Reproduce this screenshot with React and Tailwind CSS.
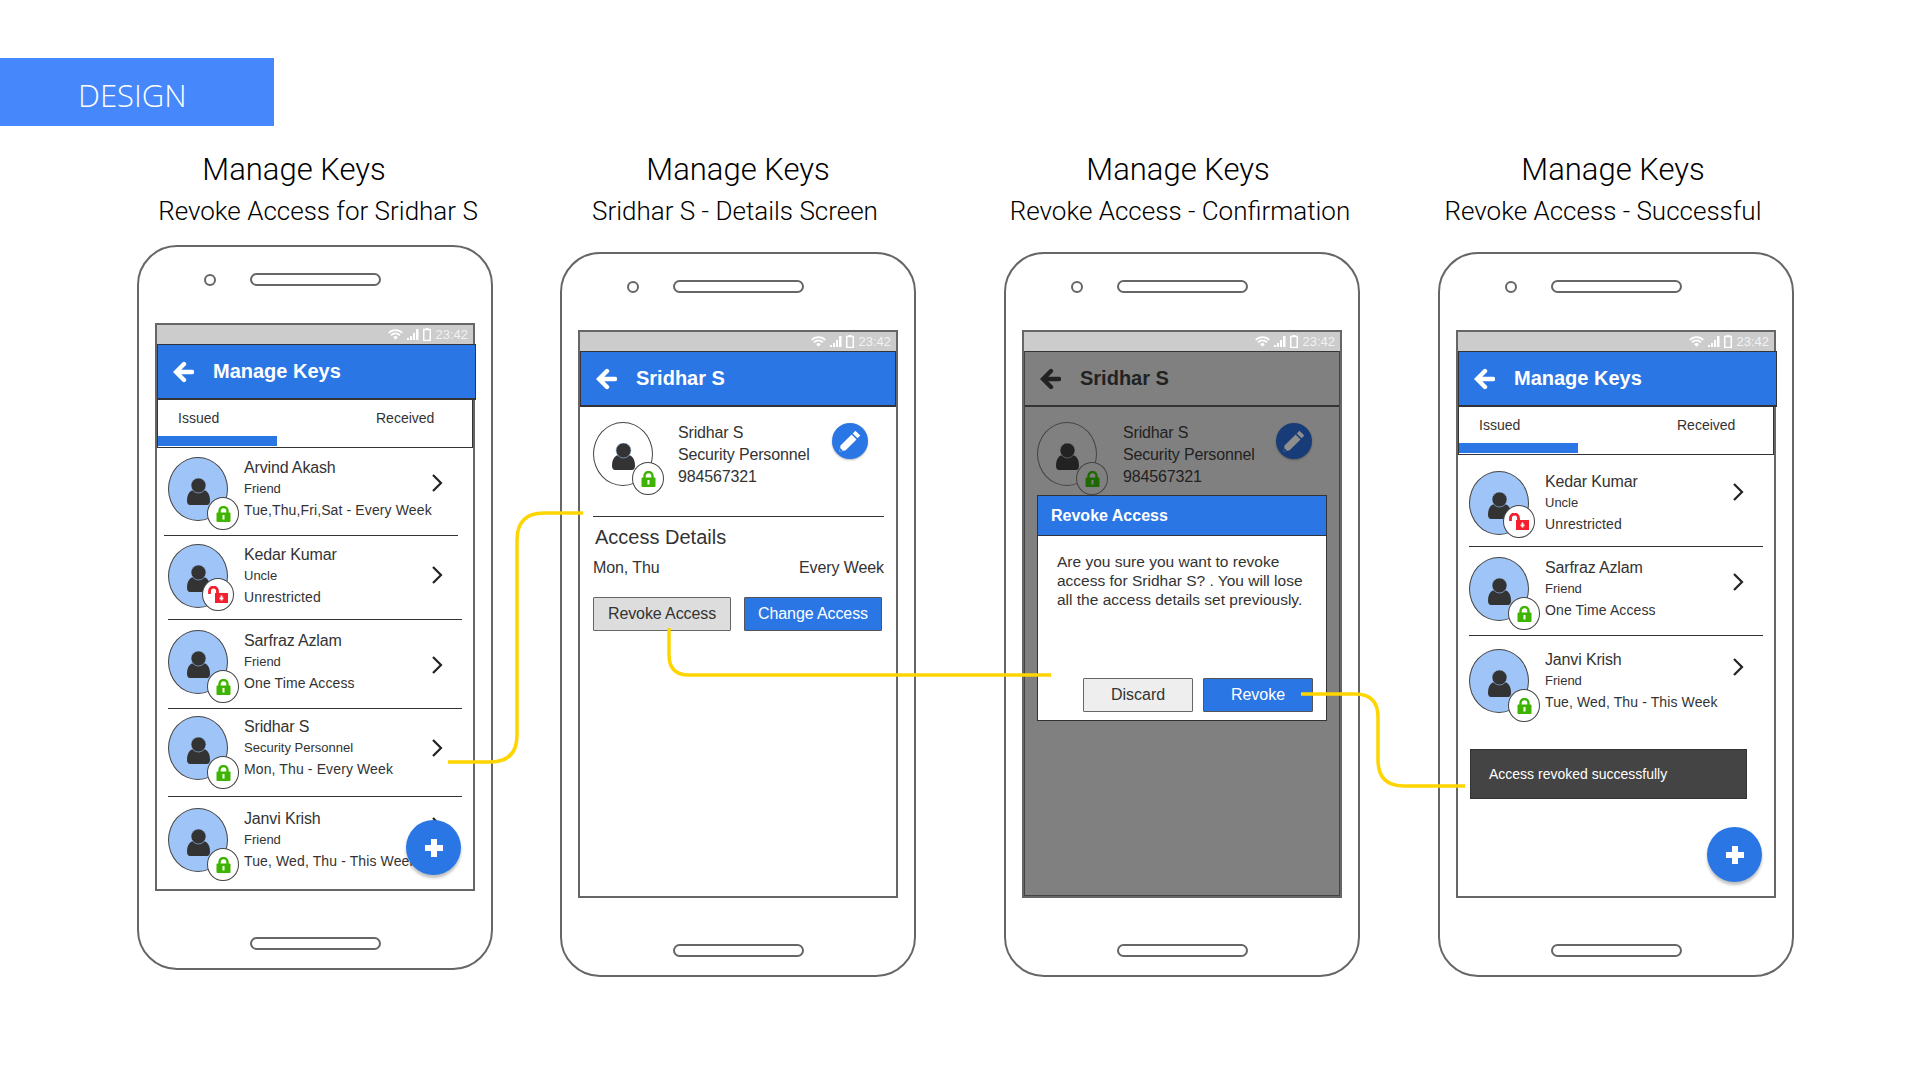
import React from 'react';

const columns = [
    { title: 'Manage Keys', sub: 'Revoke Access for Sridhar S', titleCls: 'mr-[42px]', subCls: 'ml-[6px]', phoneCls: 'mt-[14px]' },
    { title: 'Manage Keys', sub: 'Sridhar S - Details Screen', titleCls: '', subCls: 'mr-[6px]', phoneCls: 'mt-[21px]' },
    { title: 'Manage Keys', sub: 'Revoke Access - Confirmation', titleCls: 'mr-[8px]', subCls: 'mr-[4px]', phoneCls: 'mt-[21px]' },
    { title: 'Manage Keys', sub: 'Revoke Access - Successful', titleCls: 'mr-[6px]', subCls: 'mr-[26px]', phoneCls: 'mt-[21px]' },
];

const issuedRows = [
    { name: 'Arvind Akash', role: 'Friend', access: 'Tue,Thu,Fri,Sat - Every Week', cls: 'h-[88px] pt-[9px]', chevron: 'mt-[17px]', divider: 'ml-[7px]' },
    { name: 'Kedar Kumar', role: 'Uncle', access: 'Unrestricted', open: true, cls: 'h-[84px] pt-[8px]', chevron: 'mt-[22px]', divider: 'ml-[11px]' },
    { name: 'Sarfraz Azlam', role: 'Friend', access: 'One Time Access', cls: 'h-[89px] pt-[10px]', chevron: 'mt-[26px]', divider: 'ml-[11px]' },
    { name: 'Sridhar S', role: 'Security Personnel', access: 'Mon, Thu - Every Week', cls: 'h-[88px] pt-[7px]', chevron: 'mt-[23px]', divider: 'ml-[11px]' },
    { name: 'Janvi Krish', role: 'Friend', access: 'Tue, Wed, Thu - This Week', cls: 'h-[82px] pt-[11px]', chevron: 'mt-[9px]' },
];

const revokedRows = [
    { name: 'Kedar Kumar', role: 'Uncle', access: 'Unrestricted', open: true, cls: 'h-[92px] pt-[16px]', chevron: 'mt-[12px]', divider: 'ml-[11px]' },
    { name: 'Sarfraz Azlam', role: 'Friend', access: 'One Time Access', cls: 'h-[89px] pt-[10px]', chevron: 'mt-[16px]', divider: 'ml-[11px]' },
    { name: 'Janvi Krish', role: 'Friend', access: 'Tue, Wed, Thu - This Week', cls: 'h-[113px] pt-[13px]', chevron: 'mt-[9px]' },
];

function Lock({ dim }) {
    return (
        <svg className="h-[16px] w-[15px]" viewBox="0 0 15 16">
            <path d="M3.5 8V5a4 4 0 0 1 8 0v3" fill="none" stroke={dim ? '#1f6a00' : '#3cb400'} strokeWidth="2.4" />
            <rect x="0.5" y="6.5" width="14" height="9.5" rx="1" fill={dim ? '#1f6a00' : '#3cb400'} />
            <rect x="6.5" y="9" width="2" height="4.5" fill={dim ? '#808080' : '#ffffff'} />
        </svg>
    );
}

function OpenLock() {
    return (
        <svg className="h-[17px] w-[20px]" viewBox="0 0 20 17">
            <path d="M1.5 8V5a4 4 0 0 1 8 0v3" fill="none" stroke="#f5202f" strokeWidth="2.8" />
            <rect x="7" y="7" width="13" height="10" fill="#f5202f" />
            <rect x="12.6" y="9.5" width="1.8" height="5" fill="#ffffff" />
            <rect x="11.5" y="11.6" width="4" height="1.6" fill="#ffffff" />
        </svg>
    );
}

function Person({ dark }) {
    const fill = dark ? '#222222' : '#333333';
    return (
        <svg className="mt-[5px] h-[27px] w-[23px]" viewBox="0 0 23 27">
            <path d="M0 23c0-7 3-11 7-11h9c4 0 7 4 7 11 0 2-1 4-3 4H3c-2 0-3-2-3-4z" fill={fill} />
            <circle cx="11.5" cy="7.5" r="7.5" fill={fill} stroke={dark ? '#808080' : '#9fc4f7'} strokeWidth="0.6" />
        </svg>
    );
}

function Avatar({ open, blank, dim }) {
    let bg = 'bg-[#9fc4f7]';
    if (blank) bg = dim ? 'bg-[#808080]' : 'bg-white';
    return (
        <div className={`relative flex h-[64px] w-[60px] shrink-0 items-center justify-center rounded-[50%] border border-[#444] ${bg}`}>
            <Person dark={dim} />
            <div
                className={`absolute flex h-[33px] w-[32px] items-center justify-center rounded-[50%] border border-[#444] ${
                    open ? 'left-[33px] top-[33px]' : 'left-[38px] top-[39px]'
                } ${dim ? 'bg-[#808080]' : 'bg-white'}`}
            >
                {open ? <OpenLock /> : <Lock dim={dim} />}
            </div>
        </div>
    );
}

function Chevron({ className }) {
    return (
        <svg className={`h-[18px] w-[12px] shrink-0 ${className}`} viewBox="0 0 12 18">
            <path d="M2 1l8 8-8 8" fill="none" stroke="#222222" strokeWidth="2.2" />
        </svg>
    );
}

function ContactRow({ row }) {
    return (
        <div className={`relative flex flex-col ${row.cls}`}>
            <div className="flex items-start pl-[11px]">
                <Avatar open={row.open} />
                <div className="ml-[16px] w-[187px] shrink-0 whitespace-nowrap text-[#333]">
                    <div className="h-[21px] text-[16px] leading-[22px] tracking-[-0.15px]">{row.name}</div>
                    <div className="h-[21px] text-[13px] leading-[22px]">{row.role}</div>
                    <div className="h-[22px] text-[14px] leading-[23px] tracking-[0.12px]">{row.access}</div>
                </div>
                <Chevron className={row.chevron} />
            </div>
            {row.divider && <div className={`mt-auto h-px w-[294px] bg-[#333] ${row.divider}`} />}
        </div>
    );
}

function StatusBar() {
    return (
        <div className="flex h-[19px] items-center justify-end gap-[4px] bg-[#cccccc] pr-[5px] text-[13px] leading-none text-[#f2f2f2]">
            <svg className="h-[11px] w-[15px]" viewBox="0 0 15 11">
                <path d="M0.7 4a9.5 9.5 0 0 1 13.6 0M3 6.4a6.2 6.2 0 0 1 9 0" fill="none" stroke="#ffffff" strokeWidth="1.7" />
                <path d="M5.2 8.2a3.2 3.2 0 0 1 4.6 0L7.5 10.8z" fill="#ffffff" />
            </svg>
            <svg className="h-[11px] w-[12px]" viewBox="0 0 12 11">
                <path d="M0 9h2v2H0zM3 7h2v4H3zM6 4h2v7H6zM9 0h2.5v11H9z" fill="#ffffff" />
            </svg>
            <svg className="h-[13px] w-[8px]" viewBox="0 0 8 13">
                <rect x="2.5" y="0" width="3" height="1.5" fill="#ffffff" />
                <rect x="0.75" y="1.5" width="6.5" height="11" fill="none" stroke="#ffffff" strokeWidth="1.5" />
            </svg>
            <span>23:42</span>
        </div>
    );
}

function Header({ title, dim, wide }) {
    const color = dim ? '#222222' : '#ffffff';
    let cls = 'border border-[#333] bg-[#2b76e5] text-white';
    if (dim) cls = 'border-t border-t-[#333] text-[#222]';
    if (wide) cls += ' w-[319px]';
    return (
        <div className={`flex h-[56px] items-center border-b-2 border-[#333] text-[20px] font-bold ${cls}`}>
            <svg className="ml-[15px] h-[22px] w-[21px]" viewBox="0 0 21 22">
                <path d="M19 11H4M11 3l-8 8 8 8" fill="none" stroke={color} strokeWidth="4.4" strokeLinecap="round" />
            </svg>
            <span className="-mt-[1px] ml-[19px]">{title}</span>
        </div>
    );
}

function Tabs() {
    return (
        <div className="flex h-[48px] flex-col border-x border-b border-[#333]">
            <div className="flex h-[36px] items-center text-[14px] text-[#333]">
                <span className="w-[218px] pl-[20px]">Issued</span>
                <span>Received</span>
            </div>
            <div className="h-[10px] w-[119px] bg-[#2b76e5]" />
        </div>
    );
}

function Fab() {
    return (
        <div className="absolute bottom-[14px] right-[12px] flex h-[55px] w-[55px] items-center justify-center rounded-full bg-[#2b76e5] shadow-[0_3px_3px_rgba(0,0,0,0.25)]">
            <svg className="h-[20px] w-[20px]" viewBox="0 0 20 20">
                <path d="M10 1v18M1 10h18" fill="none" stroke="#ffffff" strokeWidth="6" />
            </svg>
        </div>
    );
}

function ProfileBlock({ dim }) {
    return (
        <div className={`flex items-start pt-[15px] ${dim ? 'pl-[12px]' : 'pl-[13px]'}`}>
            <Avatar blank dim={dim} />
            <div
                className={`shrink-0 whitespace-nowrap text-[16px] leading-[22px] tracking-[-0.15px] ${
                    dim ? 'ml-[26px] w-[151px] text-[#222]' : 'ml-[25px] w-[152px] text-[#333]'
                }`}
            >
                <div>Sridhar S</div>
                <div>Security Personnel</div>
                <div>984567321</div>
            </div>
            <div
                className={`ml-[2px] mt-[1px] flex h-[36px] w-[36px] items-center justify-center rounded-full shadow-[0_1px_2px_rgba(0,0,0,0.3)] ${
                    dim ? 'bg-[#173c78]' : 'bg-[#2b76e5]'
                }`}
            >
                <svg className="h-[26px] w-[26px]" viewBox="0 0 24 24">
                    <path d="M17 2.5l4.5 4.5L19 9.5 14.5 5z" fill={dim ? '#8e8e8e' : '#ffffff'} />
                    <path d="M13.5 6l4.5 4.5L8 20.5l-6 1.5 1.5-6z" fill={dim ? '#8e8e8e' : '#ffffff'} />
                    <path d="M2 22l1-3.5L5.5 21z" fill={dim ? '#173c78' : '#2b76e5'} />
                </svg>
            </div>
        </div>
    );
}

function DetailsScreen() {
    return (
        <div className="flex h-full flex-col">
            <StatusBar />
            <Header title="Sridhar S" />
            <ProfileBlock />
            <div className="ml-[13px] mt-[28px] h-px w-[291px] bg-[#333]" />
            <div className="ml-[15px] mt-[9px] text-[20px] leading-[22px] text-[#333]">Access Details</div>
            <div className="ml-[13px] mt-[10px] flex w-[291px] justify-between text-[16px] leading-[20px] tracking-[-0.1px] text-[#333]">
                <span>Mon, Thu</span>
                <span>Every Week</span>
            </div>
            <div className="ml-[13px] mt-[19px] flex w-[289px] justify-between text-[16px] tracking-[-0.1px]">
                <div className="flex h-[34px] w-[138px] items-center justify-center rounded-[1px] border border-[#666] bg-[#dddddd] text-[#333]">
                    Revoke Access
                </div>
                <div className="flex h-[34px] w-[138px] items-center justify-center rounded-[1px] border border-[#555] bg-[#2b76e5] text-white">
                    Change Access
                </div>
            </div>
        </div>
    );
}

function ConfirmScreen() {
    return (
        <div className="relative flex h-full flex-col">
            <StatusBar />
            <div className="flex-1 border-x border-b border-[#444] bg-[#808080]">
                <Header title="Sridhar S" dim />
                <ProfileBlock dim />
            </div>
            {/* Modal */}
            <div className="absolute left-[13px] top-[163px] flex h-[226px] w-[290px] flex-col border border-[#333] bg-white">
                <div className="flex h-[40px] items-center border-b border-[#333] bg-[#2b76e5] pl-[13px] text-[16px] font-bold text-white">
                    Revoke Access
                </div>
                <div className="ml-[19px] mt-[16px] w-[262px] text-[15.5px] leading-[19px] text-[#333]">
                    Are you sure you want to revoke access for Sridhar S? . You will lose all the access details set previously.
                </div>
                <div className="mb-[8px] mt-auto flex justify-end gap-[10px] pr-[13px] text-[16px]">
                    <div className="flex h-[34px] w-[110px] items-center justify-center rounded-[1px] border border-[#666] bg-[#eeeeee] text-[#333]">
                        Discard
                    </div>
                    <div className="flex h-[34px] w-[110px] items-center justify-center rounded-[1px] border border-[#555] bg-[#2b76e5] text-white">
                        Revoke
                    </div>
                </div>
            </div>
        </div>
    );
}

function ListScreen({ rows, toast }) {
    return (
        <div className="relative flex h-full flex-col">
            <StatusBar />
            <Header title="Manage Keys" wide />
            <Tabs />
            {rows.map((row) => (
                <ContactRow key={row.name} row={row} />
            ))}
            {toast && (
                <div className="ml-[12px] flex h-[50px] w-[277px] items-center border border-[#333] bg-[#444444] pl-[18px] text-[14px] text-white">
                    {toast}
                </div>
            )}
            <Fab />
        </div>
    );
}

function Phone({ className, children }) {
    return (
        <div className={`h-[725px] w-[356px] rounded-[40px] border-2 border-[#666] bg-white pl-[16px] pt-[26px] ${className}`}>
            <div className="flex h-[13px] items-center">
                <div className="ml-[49px] h-[12px] w-[12px] rounded-full border-2 border-[#666]" />
                <div className="ml-[34px] h-[13px] w-[131px] rounded-full border-2 border-[#666]" />
            </div>
            <div className="mt-[37px] h-[568px] w-[320px] border-2 border-[#666]">{children}</div>
            <div className="ml-[95px] mt-[46px] h-[13px] w-[131px] rounded-full border-2 border-[#666]" />
        </div>
    );
}

function Connectors() {
    return (
        <svg className="pointer-events-none absolute left-0 top-0 h-[1080px] w-[1920px]" viewBox="0 0 1920 1080">
            <g fill="none" stroke="#ffd500" strokeWidth="3.5">
                <path d="M448 762H490Q517 762 517 735V540Q517 513 544 513H583" />
                <path d="M669 628V655Q669 675 689 675H1051" />
                <path d="M1301 694H1355Q1378 694 1378 717V760Q1378 786 1404 786H1465" />
            </g>
        </svg>
    );
}

export default function App() {
    const screens = [
        <ListScreen rows={issuedRows} />,
        <DetailsScreen />,
        <ConfirmScreen />,
        <ListScreen rows={revokedRows} toast="Access revoked successfully" />,
    ];
    const gaps = ['', 'ml-[67px]', 'ml-[88px]', 'ml-[78px]'];

    return (
        <div className="relative h-[1080px] w-[1920px] overflow-hidden bg-white font-['Liberation_Sans',sans-serif]">
            <div className="pt-[58px]">
                <div className="flex h-[68px] w-[274px] items-center bg-[#4688fb] pl-[78px] pt-[6px] font-['Open_Sans',sans-serif] text-[31px] font-light text-white">
                    DESIGN
                </div>
            </div>
            <div className="flex pl-[137px]">
                {columns.map((col, i) => (
                    <div key={i} className={`w-[356px] shrink-0 ${gaps[i]}`}>
                        <div className="pt-[24px] whitespace-nowrap font-['Roboto',sans-serif] font-light text-black">
                            <div className="flex h-[40px] items-center justify-center text-[31px]">
                                <span className={col.titleCls}>{col.title}</span>
                            </div>
                            <div className="mt-[1px] flex h-[40px] items-center justify-center text-[26px]">
                                <span className={col.subCls}>{col.sub}</span>
                            </div>
                        </div>
                        <Phone className={col.phoneCls}>{screens[i]}</Phone>
                    </div>
                ))}
            </div>
            <Connectors />
        </div>
    );
}
